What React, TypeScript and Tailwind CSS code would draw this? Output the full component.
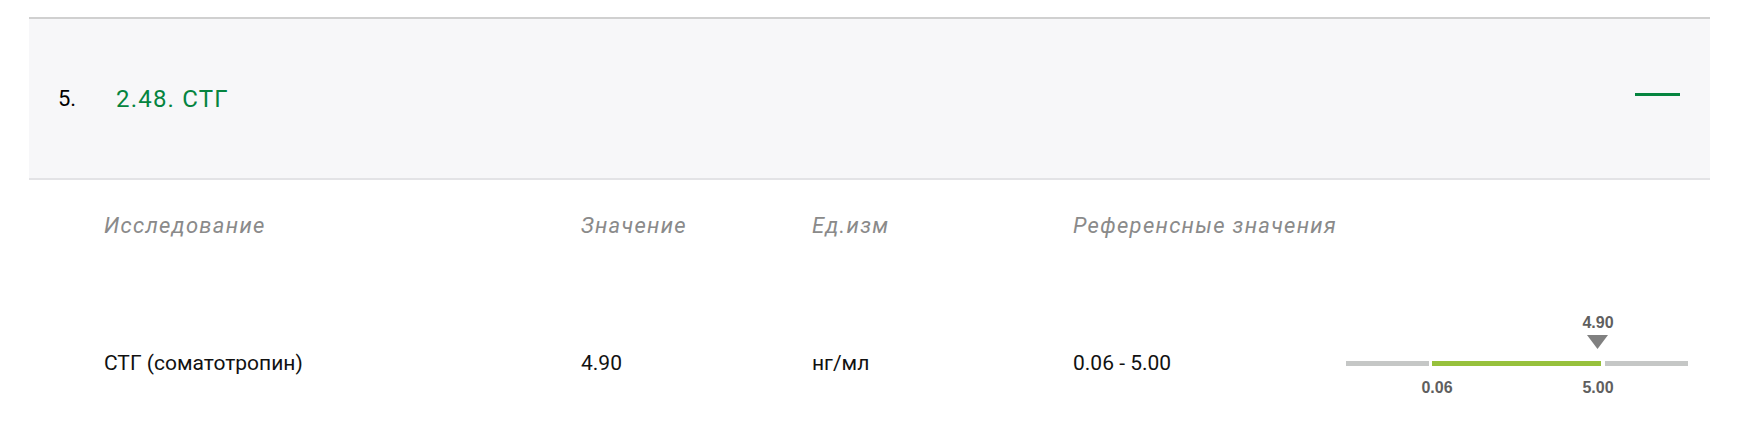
export default function App() {
  const cols = [
    "w-[477px]",
    "w-[231px]",
    "w-[261px]",
    "w-[273px]",
  ];
  return (
    <div className="w-[1750px] h-[445px] bg-white pt-[17px] pl-[29px] font-['Roboto',sans-serif]">
      <div className="w-[1681px]">
        <div className="h-[163px] bg-[#f7f7f9] border-t-2 border-b-2 border-t-[#d0d0d0] border-b-[#e3e3e6] flex items-center pl-[29px] pr-[30px]">
          <span className="text-[22px] text-black w-[58px]">5.</span>
          <span className="text-[24px] tracking-[1.2px] text-[#05843f]">2.48. СТГ</span>
          <span className="ml-auto mb-[8px] w-[45px] h-[3px] bg-[#05843f]" />
        </div>

        <div className="flex pl-[75px] pt-[33px] text-[22px] leading-[25px] italic tracking-[1.3px] text-[#8a8a8a]">
          <div className={cols[0]}>Исследование</div>
          <div className={cols[1]}>Значение</div>
          <div className={cols[2]}>Ед.изм</div>
          <div className={cols[3]}>Референсные значения</div>
        </div>

        <div className="flex items-start pl-[75px] mt-[76px] text-[21px] leading-[23px] text-[#111]">
          <div className={`${cols[0]} pt-[38px]`}>СТГ (соматотропин)</div>
          <div className={`${cols[1]} pt-[38px]`}>4.90</div>
          <div className={`${cols[2]} pt-[38px]`}>нг/мл</div>
          <div className={`${cols[3]} pt-[38px]`}>0.06 - 5.00</div>
          <div className="w-[342px] font-['Liberation_Sans',Arial,sans-serif] font-bold text-[16px] leading-[17px] text-[#5f5f5f]">
            <div className="relative h-[17px]">
              <span className="absolute left-[252px] -translate-x-1/2">4.90</span>
            </div>
            <div className="relative h-[14px] mt-[4px]">
              <svg className="absolute left-[241px] top-0" width="21" height="14" viewBox="0 0 21 14">
                <polygon points="0,0 21,0 10.5,14" fill="#808080" />
              </svg>
            </div>
            <div className="flex mt-[12px] h-[5px]">
              <div className="w-[83px] bg-[#c5c7c6]" />
              <div className="w-[169px] ml-[3px] bg-[#97c13c]" />
              <div className="w-[83px] ml-[4px] bg-[#c5c7c6]" />
            </div>
            <div className="relative h-[17px] mt-[13px]">
              <span className="absolute left-[91px] -translate-x-1/2">0.06</span>
              <span className="absolute left-[252px] -translate-x-1/2">5.00</span>
            </div>
          </div>
        </div>
      </div>
    </div>
  );
}
